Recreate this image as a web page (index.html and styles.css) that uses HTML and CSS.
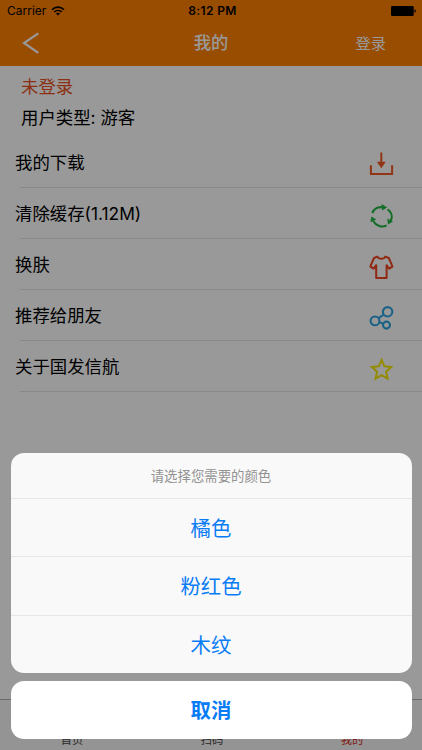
FILE: index.html
```
<!DOCTYPE html>
<html lang="zh-CN">
<head>
  <meta charset="UTF-8">
  <meta name="viewport" content="width=device-width, initial-scale=1.0">
  <title>我的</title>
  <link rel="stylesheet" href="styles.css">
</head>
<body>
  <div class="screen">
    <header class="header">
      <div class="status-bar">
        <div class="carrier">
          <span>Carrier</span>
          <svg class="wifi" width="14" height="10" viewBox="0 0 14 10" fill="none" stroke="#000" stroke-width="1.6">
            <path d="M1 3.7C4.4.3 9.6.3 13 3.7"/>
            <path d="M3.2 6C5.4 3.9 8.6 3.9 10.8 6"/>
            <path d="M7 9.5L4.9 7.4C6.1 6.4 7.9 6.4 9.1 7.4Z" fill="#000" stroke="none"/>
          </svg>
        </div>
        <div class="time">8:12 PM</div>
        <svg class="battery" width="26" height="10" viewBox="0 0 26 10">
          <rect x="0" y="0" width="22.7" height="10" rx="1.3"/>
          <path d="M23.5 3.3C25.3 3.5 25.3 6.5 23.5 6.7Z"/>
        </svg>
      </div>
      <div class="nav-bar">
        <svg class="back" width="18" height="22" viewBox="0 0 18 22" fill="none" stroke="#fff" stroke-width="2.2">
          <path d="M16.3 1.3L2 11L16.3 20.8"/>
        </svg>
        <h1 class="nav-title">我的</h1>
        <span class="login">登录</span>
      </div>
    </header>

    <section class="user">
      <div class="user-name">未登录</div>
      <div class="user-type">用户类型: 游客</div>
    </section>

    <ul class="menu">
      <li class="menu-item">
        <span>我的下载</span>
        <svg class="icon" width="26" height="26" viewBox="0 0 26 26" fill="none" stroke="#f15a22" stroke-width="2">
          <path d="M2.9 14.2V23.1H24.1V14.2"/>
          <path d="M13.3 1.5V12"/>
          <path d="M8.8 10.8H17.8L13.3 17.3Z" fill="#f15a22" stroke="none"/>
        </svg>
      </li>
      <li class="menu-item">
        <span>清除缓存(1.12M)</span>
        <svg class="icon" width="26" height="26" viewBox="0 0 26 26" fill="none" stroke="#22b845" stroke-width="2.1">
          <path d="M4.3 10C6 6 9.2 3.7 14.2 4.2"/>
          <path d="M13.6 1.1L19.2 4.5L13.9 7.4Z" fill="#22b845" stroke="none"/>
          <path d="M19.6 6.4C23.8 9.2 24.7 13.8 22.8 17.6"/>
          <path d="M19.3 15.6L25 18.4L20 21.4Z" fill="#22b845" stroke="none"/>
          <path d="M18.6 22.4C13.7 24.9 8.2 23.2 5.2 18"/>
          <path d="M2.4 19.2L3.4 13.4L8.3 16.6Z" fill="#22b845" stroke="none"/>
        </svg>
      </li>
      <li class="menu-item">
        <span>换肤</span>
        <svg class="icon" width="26" height="26" viewBox="0 0 26 26" fill="none" stroke="#f0431e" stroke-width="2" stroke-linejoin="round">
          <path d="M9.4 2.6L6 4C4.7 7.2 3.4 9.6 2.4 12.6L5.6 14.7L8.2 11.2V24H18.6V11.2L21.2 14.7L24.4 12.6C23.4 9.6 22.1 7.2 20.8 4L17.4 2.6C16 5.4 10.8 5.4 9.4 2.6Z"/>
        </svg>
      </li>
      <li class="menu-item">
        <span>推荐给朋友</span>
        <svg class="icon" width="26" height="26" viewBox="0 0 26 26" fill="none" stroke="#2da5e0" stroke-width="2.1">
          <circle cx="19.6" cy="6.8" r="4.7"/>
          <circle cx="7" cy="15.9" r="4.4"/>
          <circle cx="18.5" cy="20.1" r="3.5"/>
          <path d="M10.5 13.2L15.9 9.5M11.2 17.1L15.1 18.7"/>
        </svg>
      </li>
      <li class="menu-item">
        <span>关于国发信航</span>
        <svg class="icon" width="26" height="26" viewBox="0 0 26 26" fill="none" stroke="#f5e800" stroke-width="2">
          <path d="M13.6 3.9L16.4 10.3L23.2 11.1L18.1 15.7L19.6 22.6L13.6 19.1L7.6 22.6L9.1 15.7L4 11.1L10.8 10.3Z"/>
        </svg>
      </li>
    </ul>

    <nav class="tab-bar">
      <span class="tab">首页</span>
      <span class="tab">扫码</span>
      <span class="tab active">我的</span>
    </nav>
  </div>

  <!-- 选择皮肤颜色 -->
  <div class="overlay">
    <div class="sheet">
      <div class="sheet-title">请选择您需要的颜色</div>
      <div class="sheet-option">橘色</div>
      <div class="sheet-option">粉红色</div>
      <div class="sheet-option">木纹</div>
    </div>
    <div class="sheet-cancel">取消</div>
  </div>
</body>
</html>
```

FILE: styles.css
```
* {
  box-sizing: border-box;
}
body {
  margin: 0;
  font-family: Inter, "Noto Sans CJK SC", sans-serif;
  color: #000;
}
svg {
  display: block;
}
.screen {
  display: flex;
  flex-direction: column;
  height: 750px;
  background: #fff;
  overflow: hidden;
}
.header {
  height: 66px;
  background: #ff8000;
}
.status-bar {
  display: grid;
  grid-template-columns: 1fr auto 1fr;
  align-items: center;
  height: 21px;
  padding: 0 5px 0 7px;
  font-size: 12px;
}
.carrier {
  display: flex;
  align-items: center;
  gap: 5px;
}
.time {
  padding-left: 1px;
  font-weight: 600;
  letter-spacing: 0.35px;
}
.battery {
  justify-self: end;
}
.nav-bar {
  display: grid;
  grid-template-columns: 1fr auto 1fr;
  align-items: center;
  height: 44px;
  padding: 0 36px;
  color: #fff;
}
.back {
  margin-left: -14px;
}
.nav-title {
  margin: 0;
  font-size: 17.3px;
  font-weight: 500;
  line-height: 26px;
}
.login {
  justify-self: end;
  margin-top: -2px;
  font-size: 15.3px;
}
.user {
  height: 70px;
  padding: 5px 21px 0;
  font-size: 17.4px;
  line-height: 31px;
}
.user-name {
  color: #e8501e;
}
.menu {
  margin: 0;
  padding: 0;
  list-style: none;
}
.menu-item {
  display: flex;
  justify-content: space-between;
  align-items: center;
  height: 51px;
  padding: 0 28px 0 15px;
  font-size: 17.4px;
  background: linear-gradient(#e4e4e7, #e4e4e7) 20px 100% / 100% 1px no-repeat;
}
.menu-item:first-child {
  height: 52px;
}
.icon {
  margin-top: 4px;
}
.menu-item span {
  margin-top: -2px;
}
.tab-bar {
  display: grid;
  grid-template-columns: repeat(3, 1fr);
  align-items: end;
  height: 51px;
  margin-top: auto;
  padding: 0 0 2px 2px;
  border-top: 1px solid #b2b2b2;
  background: #f7f7f7;
  font-size: 11.2px;
  line-height: 16px;
  text-align: center;
  color: #444;
}
.tab.active {
  color: #d8261a;
}
.overlay {
  position: absolute;
  inset: 0;
  display: flex;
  flex-direction: column;
  justify-content: flex-end;
  gap: 8.3px;
  padding: 0 10.5px 10.9px;
  background: rgba(0, 0, 0, 0.4);
  color: #087cf5;
  text-align: center;
}
.sheet {
  border-radius: 13px;
  background: #f9f9f9;
  overflow: hidden;
}
.sheet-title {
  height: 45px;
  font-size: 13.4px;
  line-height: 46px;
  color: #929292;
}
.sheet-option {
  height: 58.2px;
  border-top: 1px solid #e6e6e8;
  font-size: 20.4px;
  line-height: 59px;
}
.sheet-cancel {
  height: 58px;
  border-radius: 13px;
  background: #fff;
  font-size: 20.4px;
  font-weight: 600;
  line-height: 59px;
}
```
